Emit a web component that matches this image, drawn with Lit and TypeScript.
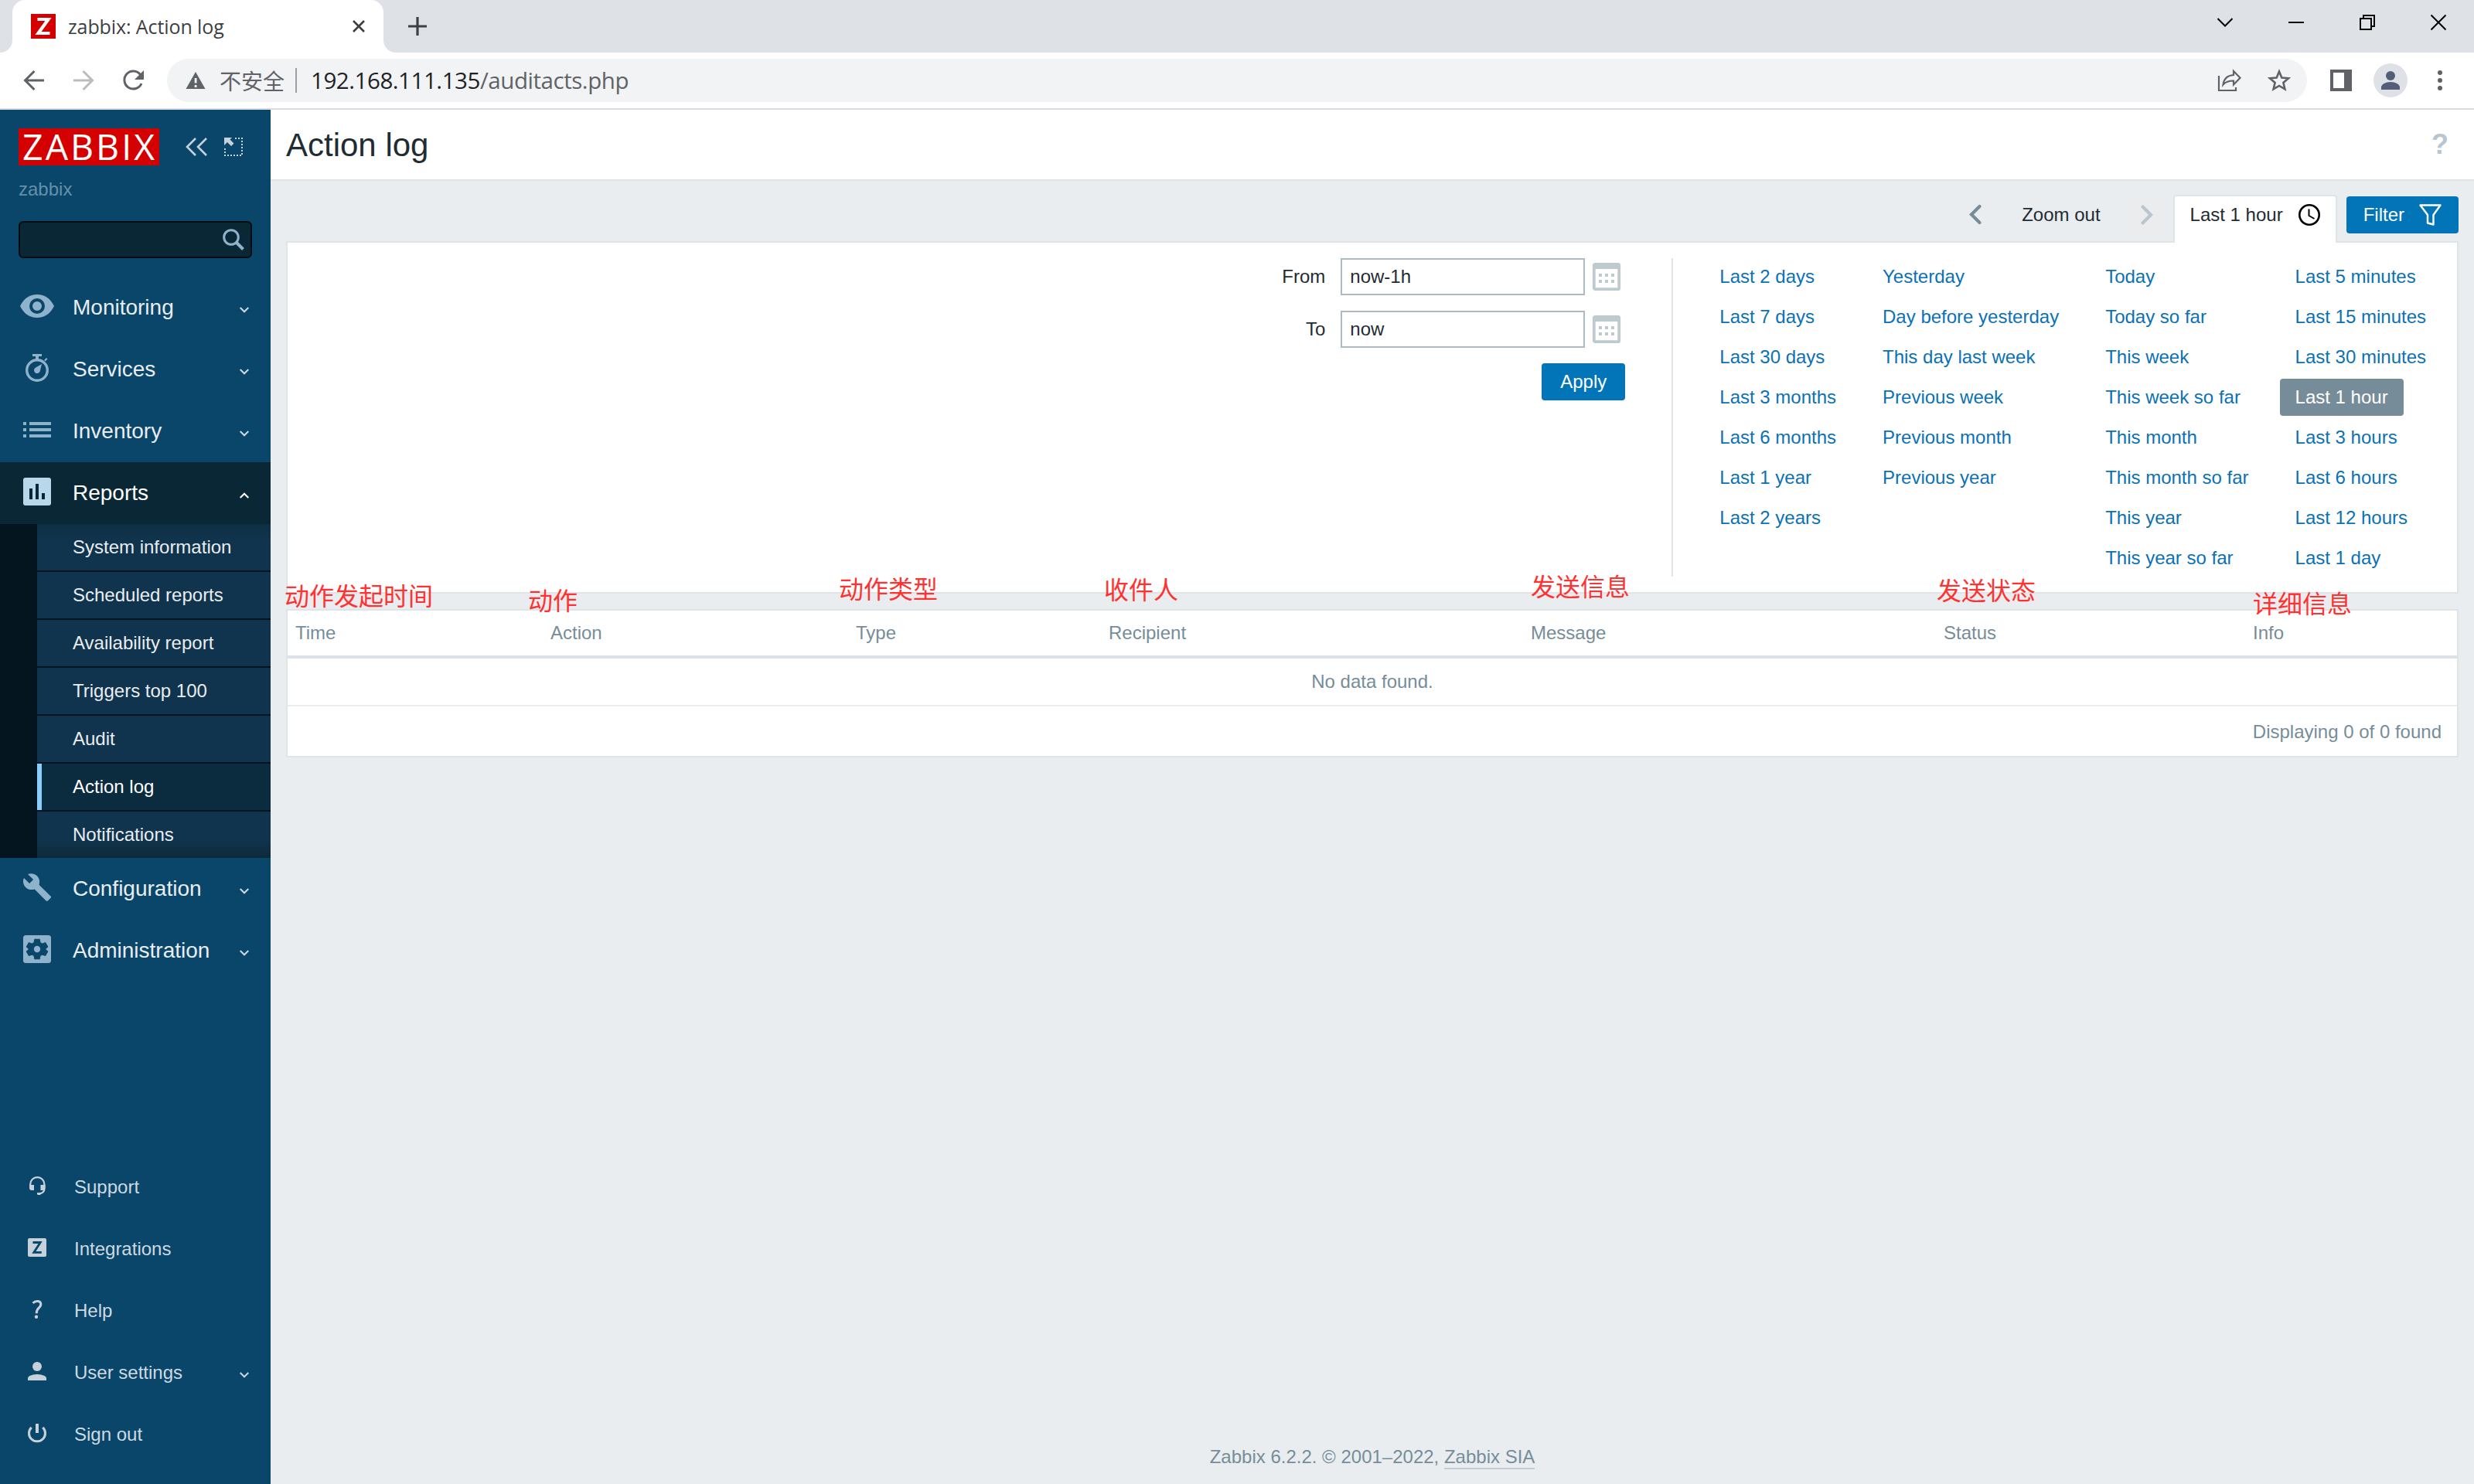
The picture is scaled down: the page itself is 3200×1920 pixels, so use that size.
import { LitElement, html, svg, css, nothing, TemplateResult } from "lit";
import { customElement, property } from "lit/decorators.js";
import { classMap } from "lit/directives/class-map.js";

const sheet = css`
  * {
    box-sizing: border-box;
  }
  svg {
    display: block;
    flex: none;
    overflow: visible;
  }
`;

/* ---------- icons ---------- */

const icon = (w: number, h: number, body: unknown) =>
  html`<svg width=${w} height=${h} viewBox="0 0 ${w} ${h}">${body}</svg>`;

const menuIcons: Record<string, TemplateResult> = {
  eye: icon(44, 30, svg`<path fill="currentColor" fill-rule="evenodd" d="M22 0C12 0 4.500 5.500 0 15c4.500 9.500 12 15 22 15s17.500-5.500 22-15C39.500 5.500 32 0 22 0Zm0 25a10 10 0 1 1 0-20 10 10 0 0 1 0 20Zm0-4a6 6 0 1 0 0-12 6 6 0 0 0 0 12Z"/>`),
  timer: icon(30, 36, svg`<circle cx="15" cy="21" r="13.300" fill="none" stroke="currentColor" stroke-width="3.400"/>
    <path fill="currentColor" d="M9 0h12v3h-4v4h-4V3H9ZM24 8l3-3 1.500 1.500-3 3Z M21 13l-2.300 9.500a4 4 0 1 1-5.900-4.800Z"/>`),
  list: icon(36, 20, svg`<path fill="currentColor" d="M0 0h4v4H0ZM8 0h28v4H8ZM0 8h4v4H0ZM8 8h28v4H8ZM0 16h4v4H0ZM8 16h28v4H8Z"/>`),
  chart: icon(36, 36, svg`<path fill="currentColor" fill-rule="evenodd" d="M3 0h30a3 3 0 0 1 3 3v30a3 3 0 0 1-3 3H3a3 3 0 0 1-3-3V3a3 3 0 0 1 3-3Zm5 14v14h4V14Zm8-6v20h4V8Zm8 12v8h4v-8Z"/>`),
  wrench: icon(36, 36, svg`<path fill="currentColor" d="M35.500 29.500 20.500 14.700c1.400-3.900.500-8.400-2.600-11.400C14.700.1 9.900-.600 6 1.100l7.100 7L8.100 13 1 6c-1.900 3.900-1 8.700 2.200 11.900 3.100 3.100 7.600 3.900 11.500 2.500l14.900 15c.600.600 1.600.600 2.300 0l3.600-3.600c.800-.600.800-1.700 0-2.300Z"/>`),
  gear: icon(36, 36, svg`<rect width="36" height="36" rx="3.500" fill="currentColor"/>
    <path fill="#0a466a" d="M14.200 4h7.600l1 4.600 2.300 1.300 4.500-1.500 3.700 6.500-3.500 3.100 3.500 3.100-3.700 6.500-4.500-1.500-2.300 1.300-1 4.600h-7.600l-1-4.600-2.300-1.300-4.500 1.500-3.700-6.500L6.200 18l-3.500-3.100 3.700-6.500 4.500 1.500 2.300-1.300Z" transform="translate(1.100 1.100) scale(.94)"/>
    <circle cx="18" cy="18" r="4.200" fill="currentColor"/>`),
  headset: icon(24, 24, svg`<path fill="none" stroke="currentColor" stroke-width="2.200" d="M3.200 12v-1.800a8.800 8.800 0 0 1 18.200 0V16c0 4-3 6-7 6.300"/>
    <path fill="currentColor" d="M2 11h6v7H5a3 3 0 0 1-3-3ZM16.500 11h6v4a3 3 0 0 1-3 3h-3ZM12 21h4.500v3H14a1.500 1.500 0 0 1-2-1.500Z"/>`),
  zbox: icon(24, 24, svg`<rect width="24" height="24" rx="2" fill="currentColor"/>
    <path fill="none" stroke="#0a466a" stroke-width="2.800" d="M6.500 5.500h9.700L7.800 18.400h10"/>`),
  help: icon(24, 24, svg`<path fill="none" stroke="currentColor" stroke-width="3" d="M6.500 4C8.500 2 11 1.400 13 1.600c4.500.400 4.800 5 2 7.700-2.300 2.200-3.800 3.200-3.800 8"/>
    <circle cx="11" cy="21.800" r="2.200" fill="currentColor"/>`),
  user: icon(24, 24, svg`<circle cx="12" cy="6" r="6" fill="currentColor"/><path fill="currentColor" d="M0 24v-3c0-3 7-5 12-5s12 2 12 5v3Z"/>`),
  power: icon(24, 24, svg`<path fill="currentColor" d="M10 0h4v12h-4Z"/><path fill="none" stroke="currentColor" stroke-width="3" d="M4.700 4.800A10.500 10.500 0 1 0 19.300 4.800"/>`),
};

const calendar = icon(36, 36, svg`<rect x="1.800" y="1.800" width="32.400" height="32.400" rx="1.500" fill="#fff" stroke="#bfcacf" stroke-width="3.800"/>
  <path fill="#bfcacf" d="M1 1h34v7H1ZM8 14h4v4H8ZM16 14h4v4h-4ZM24 14h4v4h-4ZM8 22h4v4H8ZM16 22h4v4h-4ZM24 22h4v4h-4Z"/>`);

/* ---------- browser window frame ---------- */

@customElement("browser-frame")
export class BrowserFrame extends LitElement {
  static styles = [
    sheet,
    css`
      :host {
        display: block;
        font-family: "Open Sans", "Noto Sans CJK SC", sans-serif;
      }
      .tabs {
        display: flex;
        height: 68px;
        background: #dee1e6;
      }
      .flare {
        width: 16px;
        background: radial-gradient(circle at 0 0, #dee1e6 15.5px, #fff 16.5px) no-repeat 0 52px / 16px 16px;
      }
      .flare.right {
        background-image: radial-gradient(circle at 100% 0, #dee1e6 15.5px, #fff 16.5px);
      }
      .tab {
        width: 480px;
        display: flex;
        align-items: center;
        padding: 0 24px;
        background: #fff;
        border-radius: 16px 16px 0 0;
      }
      .title {
        margin-left: 16px;
        flex: 1;
        font-size: 25px;
        letter-spacing: -0.1px;
        color: #3c4043;
        white-space: nowrap;
      }
      .plus {
        margin: 22px 0 0 16px;
      }
      .controls {
        display: flex;
        gap: 72px;
        align-items: center;
        height: 58px;
        margin-left: auto;
        padding-right: 36px;
      }
      .toolbar {
        display: flex;
        align-items: center;
        height: 74px;
        padding: 0 36px 0 30px;
        background: #fff;
        border-bottom: 2px solid #dadce0;
      }
      .nav {
        display: flex;
        gap: 36px;
        width: 186px;
      }
      .omnibox {
        flex: 1;
        display: flex;
        align-items: center;
        height: 56px;
        padding: 0 20px 0 24px;
        border-radius: 28px;
        background: #f1f3f4;
        color: #5f6368;
        font-size: 28px;
        white-space: nowrap;
      }
      .insecure {
        margin-left: 18px;
      }
      .bar {
        width: 2px;
        height: 32px;
        margin: 0 18px 0 14px;
        background: #9aa0a6;
      }
      .url {
        flex: 1;
        margin-top: -2px;
        font-size: 29.5px;
        letter-spacing: -0.45px;
      }
      .host {
        color: #202124;
      }
      .omni-tools {
        display: flex;
        gap: 32px;
      }
      .tools {
        display: flex;
        align-items: center;
        gap: 28px;
        margin-left: 30px;
      }
      .dots {
        margin: 0 0 0 6px;
      }
    `,
  ];

  render() {
    return html`
      <div class="tabs">
        <div class="flare"></div>
        <div class="tab">
          ${icon(32, 32, svg`<rect width="32" height="32" fill="#d40000"/><path fill="none" stroke="#fff" stroke-width="4.200" d="M8.500 7h14L9.500 25h15"/>`)}
          <span class="title">zabbix: Action log</span>
          ${icon(16, 16, svg`<path stroke="#3c4043" stroke-width="2.600" d="M1 1l14 14M15 1L1 15"/>`)}
        </div>
        <div class="flare right"></div>
        <div class="plus">${icon(24, 24, svg`<path stroke="#3c4043" stroke-width="3.200" d="M12 0v24M0 12h24"/>`)}</div>
        <div class="controls">
          ${icon(20, 20, svg`<path fill="none" stroke="#000" stroke-width="2" d="M.5 5l9.500 9.500L19.500 5"/>`)}
          ${icon(20, 20, svg`<path stroke="#000" stroke-width="2" d="M0 10h20"/>`)}
          ${icon(20, 20, svg`<path fill="none" stroke="#000" stroke-width="2" d="M1 5h14v14H1ZM5 5V1h14v14h-4"/>`)}
          ${icon(20, 20, svg`<path stroke="#000" stroke-width="2" d="M.5.5l19 19M19.500.5l-19 19"/>`)}
        </div>
      </div>
      <div class="toolbar">
        <div class="nav">
          ${icon(28, 28, svg`<path fill="none" stroke="#5f6368" stroke-width="3" d="M27 14H3M14.500 2L2.500 14l12 12"/>`)}
          ${icon(28, 28, svg`<path fill="none" stroke="#babcbe" stroke-width="3" d="M1 14h24M13.500 2l12 12-12 12"/>`)}
          ${icon(28, 28, svg`<path fill="none" stroke="#5f6368" stroke-width="3" d="M23.500 6.500A11.500 11.500 0 1 0 25 18"/><path fill="#5f6368" d="M28 1v12H16Z"/>`)}
        </div>
        <div class="omnibox">
          ${icon(26, 24, svg`<path fill="#5f6368" fill-rule="evenodd" d="M13 1l12.500 22H.5ZM11.700 9v6.500h2.800V9Zm0 9v3h2.800v-3Z"/>`)}
          <span class="insecure">不安全</span>
          <span class="bar"></span>
          <span class="url"><span class="host">192.168.111.135</span>/auditacts.php</span>
          <div class="omni-tools">
            ${icon(32, 32, svg`<path fill="none" stroke="#5f6368" stroke-width="2.200" d="M2 10v19h22v-4M7.500 21.500C8.500 13.500 13 9.500 21 9V4l8.500 8.800L21 21.500v-5C15 16.500 11 17.500 7.500 21.500Z"/>`)}
            ${icon(32, 32, svg`<path fill="none" stroke="#5f6368" stroke-width="2.600" d="M16 4.500l3.300 8 8.700.7-6.600 5.700 2 8.500L16 22.900l-7.400 4.500 2-8.500L4 13.200l8.700-.7Z"/>`)}
          </div>
        </div>
        <div class="tools">
          ${icon(28, 28, svg`<path fill="#5f6368" fill-rule="evenodd" d="M0 0h28v28H0ZM4 4v20h14V4Z"/>`)}
          ${icon(44, 44, svg`<circle cx="22" cy="22" r="22" fill="#dee1e6"/><circle cx="22" cy="16" r="6" fill="#535f75"/><path fill="#535f75" d="M10 34v-3c0-4 6-7 12-7s12 3 12 7v3Z"/>`)}
          <div class="dots">${icon(16, 28, svg`<g fill="#5f6368"><circle cx="8" cy="4" r="3"/><circle cx="8" cy="14" r="3"/><circle cx="8" cy="24" r="3"/></g>`)}</div>
        </div>
      </div>
    `;
  }
}

/* ---------- sidebar ---------- */

interface MenuItem {
  label: string;
  icon: string;
  expandable?: boolean;
  children?: string[];
}

const mainMenu: MenuItem[] = [
  { label: "Monitoring", icon: "eye", expandable: true },
  { label: "Services", icon: "timer", expandable: true },
  { label: "Inventory", icon: "list", expandable: true },
  {
    label: "Reports",
    icon: "chart",
    expandable: true,
    children: [
      "System information",
      "Scheduled reports",
      "Availability report",
      "Triggers top 100",
      "Audit",
      "Action log",
      "Notifications",
    ],
  },
  { label: "Configuration", icon: "wrench", expandable: true },
  { label: "Administration", icon: "gear", expandable: true },
];

const userMenu: MenuItem[] = [
  { label: "Support", icon: "headset" },
  { label: "Integrations", icon: "zbox" },
  { label: "Help", icon: "help" },
  { label: "User settings", icon: "user", expandable: true },
  { label: "Sign out", icon: "power" },
];

@customElement("side-nav")
export class SideNav extends LitElement {
  @property() current = "";

  static styles = [
    sheet,
    css`
      :host {
        display: flex;
        flex-direction: column;
        width: 350px;
        padding: 24px 0;
        background: #0a466a;
        color: #e9edf0;
      }
      .brand {
        display: flex;
        align-items: center;
        height: 48px;
        padding: 0 36px 0 24px;
      }
      .collapse {
        margin: 0 22px 0 34px;
      }
      .server {
        margin: 17px 0 0 24px;
        line-height: 28px;
        color: #6490a9;
      }
      .search {
        display: flex;
        align-items: center;
        justify-content: flex-end;
        height: 48px;
        margin: 27px 24px 24px;
        padding: 0 7px 1px 0;
        background: #0a2736;
        border: 2px solid #010b12;
        border-radius: 6px;
      }
      .item {
        display: flex;
        align-items: center;
        height: 80px;
        padding-right: 28px;
        font-size: 28px;
      }
      .icon {
        display: flex;
        justify-content: center;
        width: 96px;
        margin: -4px -2px 0 0;
        color: #8fb3cb;
      }
      .label {
        flex: 1;
      }
      .arrow {
        margin-top: 5px;
        color: #ccd9e1;
      }
      .open {
        background: #0a2736;
        color: #fff;
      }
      .open .icon {
        color: #b9d7ea;
      }
      .open .arrow {
        color: #fff;
      }
      .sub {
        display: flex;
        flex-direction: column;
        gap: 2px;
        padding-left: 48px;
        background: #04151f;
      }
      .child {
        height: 60px;
        padding-left: 46px;
        line-height: 60px;
        background-color: #10344d;
      }
      .child:first-child {
        background-image: linear-gradient(#0e3044, #10344d 22px);
      }
      .child:last-child {
        background-image: linear-gradient(#10344d 36px, #0d2a3b);
      }
      .child.current {
        padding-left: 40px;
        border-left: 6px solid #8acdff;
        background: #0b2b3f;
        color: #fff;
      }
      .user {
        margin-top: auto;
      }
      .user .item {
        font-size: 24px;
        color: #cddae2;
      }
      .user .label {
        margin: 0 0 0 2px;
      }
      .user .icon {
        color: #c5d2db;
      }
    `,
  ];

  private item(m: MenuItem) {
    const open = !!m.children;
    return html`
      <div class=${classMap({ item: true, open })}>
        <span class="icon">${menuIcons[m.icon]}</span>
        <span class="label">${m.label}</span>
        ${m.expandable
          ? html`<span class="arrow">
              ${icon(12, 8, svg`<path fill="none" stroke="currentColor" stroke-width="2" d=${open ? "M.7 7L6 1.700 11.300 7" : "M.7 1L6 6.300 11.300 1"}/>`)}
            </span>`
          : nothing}
      </div>
      ${m.children
        ? html`<div class="sub">
            ${m.children.map(
              (c) => html`<div class=${classMap({ child: true, current: c === this.current })}>${c}</div>`
            )}
          </div>`
        : nothing}
    `;
  }

  render() {
    return html`
      <div class="brand">
        ${icon(182, 48, svg`<rect width="182" height="48" fill="#d40000"/>
          <text x="5" y="40.500" font-family="Open Sans, sans-serif" font-size="46.500" fill="#fff" textLength="171" lengthAdjust="spacing">ZABBIX</text>`)}
        <div class="collapse">${icon(28, 24, svg`<path fill="none" stroke="#c5d2db" stroke-width="2.600" d="M13 1L2 12l11 11M27 1L16 12l11 11"/>`)}</div>
        ${icon(24, 24, svg`<path fill="#c5d2db" d="M0 0h10L7.500 2.500l5 5-3.500 3.500-5-5L0 10Z"/>
          <path fill="none" stroke="#c5d2db" stroke-width="2" stroke-dasharray="2 2" d="M14 1h10M23 4v20M1 14v10M4 23h20"/>`)}
      </div>
      <div class="server">zabbix</div>
      <div class="search">
        ${icon(30, 30, svg`<circle cx="12" cy="12" r="9.300" fill="none" stroke="#8fb3cb" stroke-width="3"/><path stroke="#8fb3cb" stroke-width="4" d="M18.500 18.500l9 9"/>`)}
      </div>
      <nav>${mainMenu.map((m) => this.item(m))}</nav>
      <nav class="user">${userMenu.map((m) => this.item(m))}</nav>
    `;
  }
}

/* ---------- time filter ---------- */

const ranges = [
  ["Last 2 days", "Last 7 days", "Last 30 days", "Last 3 months", "Last 6 months", "Last 1 year", "Last 2 years"],
  ["Yesterday", "Day before yesterday", "This day last week", "Previous week", "Previous month", "Previous year"],
  ["Today", "Today so far", "This week", "This week so far", "This month", "This month so far", "This year", "This year so far"],
  ["Last 5 minutes", "Last 15 minutes", "Last 30 minutes", "Last 1 hour", "Last 3 hours", "Last 6 hours", "Last 12 hours", "Last 1 day"],
];

@customElement("time-filter")
export class TimeFilter extends LitElement {
  @property() selected = "";

  static styles = [
    sheet,
    css`
      :host {
        display: block;
      }
      .bar {
        display: flex;
        justify-content: flex-end;
        height: 62px;
      }
      .zoom {
        display: flex;
        align-items: center;
        height: 48px;
        margin: 2px 10px 0 0;
      }
      .zoom-label {
        margin: 0 36px 0 52px;
      }
      .next {
        display: flex;
        align-items: center;
        justify-content: center;
        width: 48px;
        height: 48px;
        border-radius: 4px;
        background: #ebecee;
      }
      .tab {
        position: relative;
        display: flex;
        align-items: center;
        height: 62px;
        padding: 0 20px 12px;
        background: #fff;
        border: 2px solid #dfe4e7;
        border-bottom: 0;
        border-radius: 4px 4px 0 0;
        margin-right: 12px;
      }
      .tab svg {
        margin-left: 20px;
      }
      .button {
        display: flex;
        align-items: center;
        height: 48px;
        padding: 0 22px;
        border-radius: 4px;
        background: #0275b8;
        color: #fff;
      }
      .apply {
        width: 108px;
        justify-content: center;
      }
      .filter {
        margin-top: 2px;
      }
      .filter svg {
        margin-left: 19px;
      }
      .panel {
        display: flex;
        justify-content: flex-end;
        height: 456px;
        margin-top: -2px;
        padding: 20px;
        background: #fff;
        border: 2px solid #dfe4e7;
      }
      .form {
        display: flex;
        flex-direction: column;
        align-items: flex-end;
        gap: 20px;
        margin-right: 60px;
      }
      .field {
        display: flex;
        align-items: center;
        padding-right: 6px;
      }
      .input {
        width: 316px;
        height: 48px;
        margin: 0 10px 0 20px;
        padding: 0 10px;
        line-height: 44px;
        border: 2px solid #acbbc2;
        background: #fff;
      }
      .ranges {
        display: flex;
        gap: 20px;
        height: 412px;
        padding-left: 40px;
        border-left: 2px solid #dfe4e7;
      }
      .column {
        display: flex;
        flex-direction: column;
        align-items: flex-start;
        gap: 4px;
      }
      .range {
        height: 48px;
        padding: 0 20px;
        line-height: 48px;
        border-radius: 4px;
        color: #0b71b4;
        white-space: nowrap;
      }
      .range.on {
        background: #768d99;
        color: #fff;
      }
    `,
  ];

  render() {
    return html`
      <div class="bar">
        <div class="zoom">
          ${icon(16, 28, svg`<path fill="none" stroke="#768d99" stroke-width="4.200" stroke-linecap="round" d="M13.500 3L3 13.500 13.500 24"/>`)}
          <span class="zoom-label">Zoom out</span>
          <div class="next">
            ${icon(16, 28, svg`<path fill="none" stroke="#b9c7cd" stroke-width="4.200" stroke-linecap="round" d="M2.500 3.500L13 14 2.500 24.500"/>`)}
          </div>
        </div>
        <div class="tab">
          ${this.selected}
          ${icon(28, 28, svg`<circle cx="14" cy="14" r="12.700" fill="none" stroke="#000" stroke-width="2.600"/><path fill="none" stroke="#000" stroke-width="2" d="M13.500 6.500v8.500l7 4"/>`)}
        </div>
        <div class="button filter">
          Filter
          ${icon(29, 28, svg`<path fill="none" stroke="#fff" stroke-width="2.400" stroke-linejoin="round" d="M1.500 1.500h26l-9 12.500v12.500l-7.500-2V14Z"/>`)}
        </div>
      </div>
      <div class="panel">
        <div class="form">
          <div class="field">From<div class="input">now-1h</div>${calendar}</div>
          <div class="field">To<div class="input">now</div>${calendar}</div>
          <div class="button apply">Apply</div>
        </div>
        <div class="ranges">
          ${ranges.map(
            (col) => html`<div class="column">
              ${col.map((r) => html`<div class=${classMap({ range: true, on: r === this.selected })}>${r}</div>`)}
            </div>`
          )}
        </div>
      </div>
    `;
  }
}

/* ---------- page ---------- */

const columns = ["Time", "Action", "Type", "Recipient", "Message", "Status", "Info"];

const notes = [
  { text: "动作发起时间", x: 368, y: 769 },
  { text: "动作", x: 683, y: 775 },
  { text: "动作类型", x: 1085, y: 760 },
  { text: "收件人", x: 1428, y: 761 },
  { text: "发送信息", x: 1980, y: 757 },
  { text: "发送状态", x: 2505, y: 762 },
  { text: "详细信息", x: 2914, y: 779 },
];

@customElement("app-root")
export class AppRoot extends LitElement {
  static styles = [
    sheet,
    css`
      :host {
        position: relative;
        display: flex;
        flex-direction: column;
        width: 3200px;
        height: 1920px;
        overflow: hidden;
        font: 24px "Liberation Sans", Arial, sans-serif;
        color: #1f2c33;
        background: #e9edf0;
      }
      .body {
        flex: 1;
        display: flex;
      }
      .main {
        flex: 1;
        display: flex;
        flex-direction: column;
      }
      .header {
        display: flex;
        align-items: center;
        justify-content: space-between;
        height: 92px;
        padding: 0 33px 0 20px;
        background: #fff;
        border-bottom: 2px solid #dfe4e7;
      }
      .title {
        margin: 2px 0 0;
        font-size: 42px;
        font-weight: 400;
      }
      .help {
        font-size: 36px;
        font-weight: 700;
        color: #b8c6ce;
      }
      .content {
        flex: 1;
        padding: 18px 20px 0;
      }
      .table {
        margin-top: 20px;
        color: #768d99;
        background: #fff;
        border: 2px solid #dfe4e7;
      }
      .head {
        display: grid;
        grid-template-columns: 330px 395px 327px 546px 534px 400px 1fr;
        height: 62px;
        padding-left: 10px;
        line-height: 57px;
        border-bottom: 4px solid #dce2e7;
      }
      .empty {
        height: 62px;
        line-height: 59px;
        text-align: center;
        border-bottom: 2px solid #e9edf0;
      }
      .stats {
        height: 64px;
        padding-right: 20px;
        line-height: 66px;
        text-align: right;
      }
      .footer {
        padding-bottom: 19px;
        line-height: 28px;
        text-align: center;
        color: #768d99;
      }
      .link {
        display: inline-block;
        border-bottom: 2px solid #c3ccd5;
      }
      .note {
        position: absolute;
        font: 32px/40px "Noto Sans CJK SC", sans-serif;
        color: #ff3232;
        white-space: nowrap;
        transform: translateY(-50%);
      }
    `,
  ];

  render() {
    return html`
      <browser-frame></browser-frame>
      <div class="body">
        <side-nav current="Action log"></side-nav>
        <div class="main">
          <header class="header">
            <h1 class="title">Action log</h1>
            <span class="help">?</span>
          </header>
          <div class="content">
            <time-filter selected="Last 1 hour"></time-filter>
            <div class="table">
              <div class="head">${columns.map((c) => html`<span>${c}</span>`)}</div>
              <div class="empty">No data found.</div>
              <div class="stats">Displaying 0 of 0 found</div>
            </div>
          </div>
          <footer class="footer">Zabbix 6.2.2. © 2001–2022, <span class="link">Zabbix SIA</span></footer>
        </div>
      </div>
      ${notes.map((n) => html`<span class="note" style="left:${n.x}px;top:${n.y}px">${n.text}</span>`)}
    `;
  }
}
